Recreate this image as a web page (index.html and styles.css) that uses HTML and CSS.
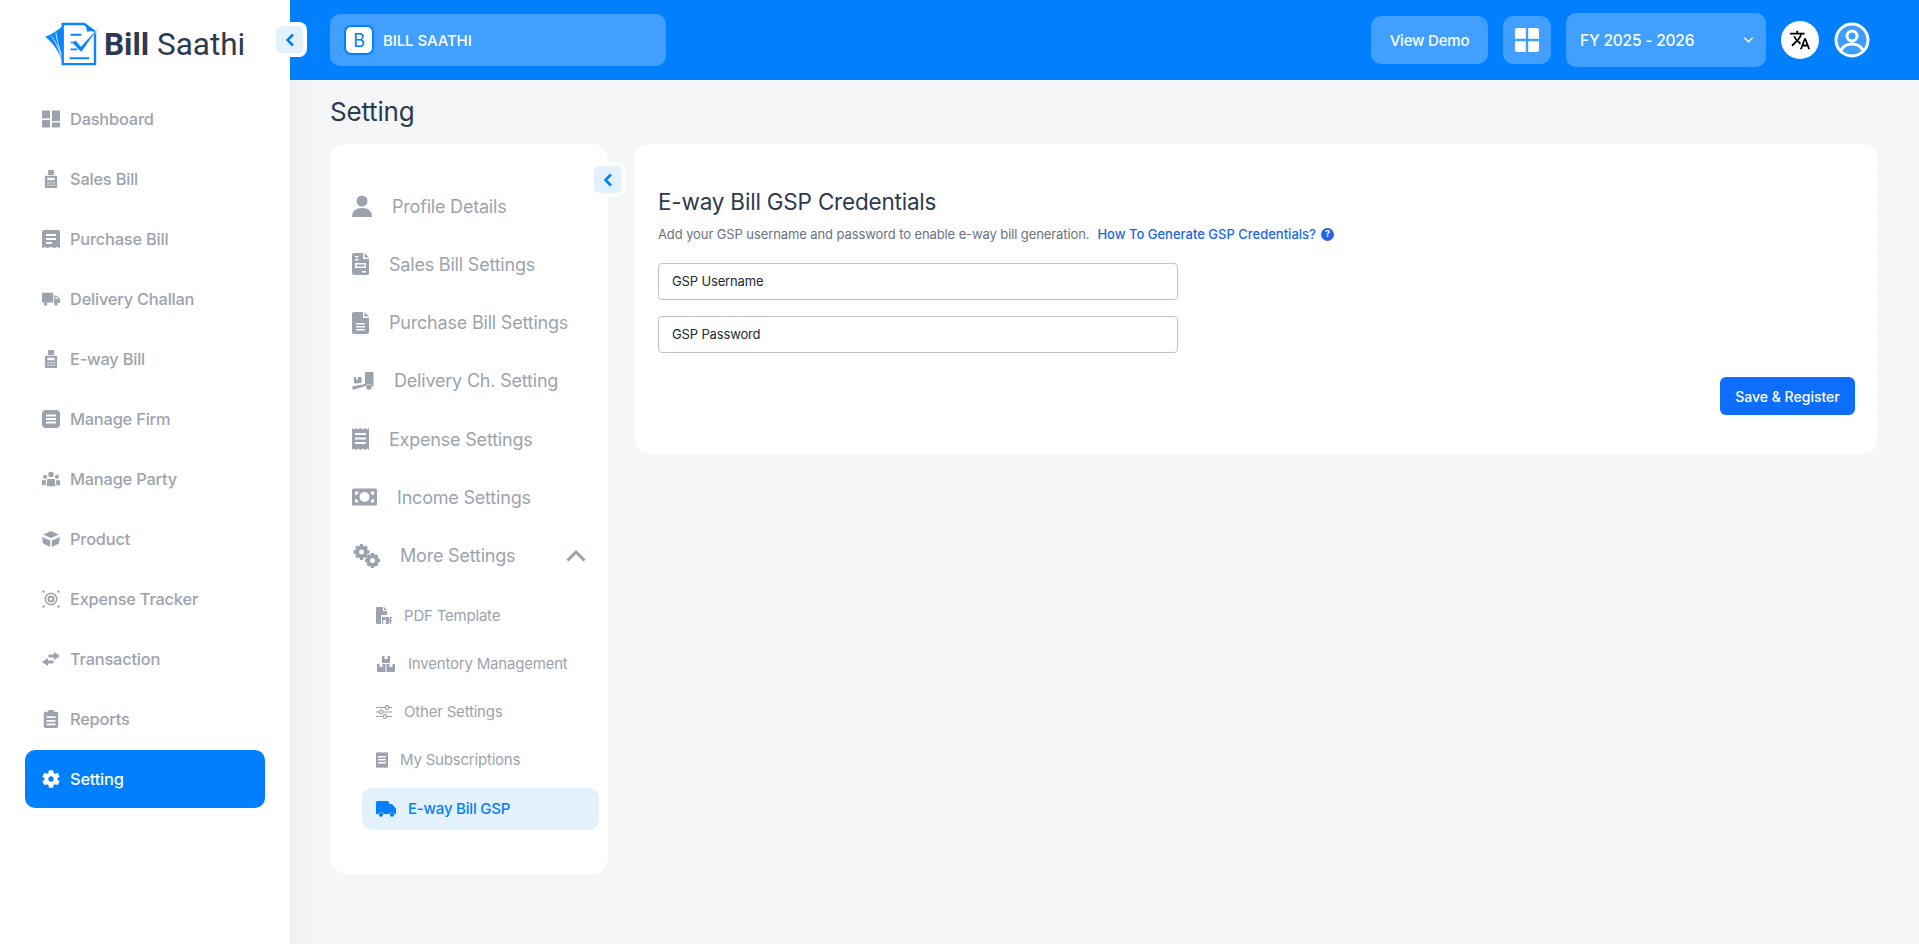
FILE: index.html
```html
<!doctype html>
<html lang="en">
    <head>
        <title>Bill Saathi - Setting</title>
        <meta name="viewport" content="width=device-width, initial-scale=1"/>
        <link rel="stylesheet" href="styles.css">
    </head>
    <body>
        <svg class="sprite" aria-hidden="true">
            <symbol id="i-pos" viewBox="0 0 18 22"><path d="M5.500 0h7v6h-7z"/><path fill-rule="evenodd" d="M3 7h12a1.500 1.500 0 0 1 1.500 1.500V20.500A1.500 1.500 0 0 1 15 22H3a1.500 1.500 0 0 1-1.500-1.500V8.500A1.500 1.500 0 0 1 3 7zm1.500 2.500v3h9v-3zM4.500 15v1.200h2V15zm3.500 0v1.200h2V15zm3.500 0v1.200h2V15zm-7 3v1.200h2V18zm3.500 0v1.200h2V18zm3.500 0v1.200h2V18z"/></symbol>
        </svg>

        <aside class="sidebar">
            <div class="logo">
                <svg class="logo__mark" viewBox="0 0 56 46">
                    <path fill="#0a84ff" d="M0 15C6 13 12 9 18 4L18 41C14 30 8 21 0 15z"/>
                    <path fill="none" stroke="#fff" stroke-width=".8" d="M6 14C10 19 14 27 17 37M11 11C12 18 14 26 17 34"/>
                    <path fill="#fff" stroke="#0a84ff" stroke-width="2.400" d="M18 2h22l11 8v33H18z"/>
                    <path fill="#0a84ff" d="M41 2l9 7-7 1z"/>
                    <path stroke="#0a84ff" stroke-width="2" d="M26 13h11M26 21h5M26 28h7M25 37h20"/>
                    <path fill="#0a84ff" stroke="#fff" stroke-width=".6" d="M27 20.500L31.500 19 36.500 25 56 4 37 31z"/>
                </svg>
                <span class="logo__text"><b>Bill</b> Saathi</span>
            </div>
            <nav class="nav">
                <a class="nav__item">
                    <svg class="nav__icon" viewBox="0 0 18 18"><path d="M0 1.500a1 1 0 0 1 1-1h7v8H1a1 1 0 0 1-1-1zM0 10h8v7.500H1a1 1 0 0 1-1-1zM10 .5h7a1 1 0 0 1 1 1V11h-8zM10 12.500h8v4a1 1 0 0 1-1 1h-7z"/></svg>
                    Dashboard
                </a>
                <a class="nav__item">
                    <svg class="nav__icon" viewBox="0 0 18 22"><use href="#i-pos"/></svg>
                    Sales Bill
                </a>
                <a class="nav__item">
                    <svg class="nav__icon" viewBox="0 0 18 18"><path fill-rule="evenodd" d="M2 0h14a2 2 0 0 1 2 2v16l-3-1-2 1-4-1-4 1-2-1-3 1V2a2 2 0 0 1 2-2zm2 4v2h10V4zm0 4v2h10V8zm0 4v2h6v-2z"/></svg>
                    Purchase Bill
                </a>
                <a class="nav__item">
                    <svg class="nav__icon" viewBox="0 0 20 16"><path d="M0 1h12.500v11H0z"/><path fill-rule="evenodd" d="M13.500 4h2.500l4 4v4.500h-6.500zm1.500 1.500V8h3l-2.200-2.500z"/><circle cx="4" cy="13.500" r="2"/><circle cx="15.500" cy="13.500" r="2"/></svg>
                    Delivery Challan
                </a>
                <a class="nav__item">
                    <svg class="nav__icon" viewBox="0 0 18 22"><use href="#i-pos"/></svg>
                    E-way Bill
                </a>
                <a class="nav__item">
                    <svg class="nav__icon" viewBox="0 0 18 18"><path fill-rule="evenodd" d="M4 0h10a4 4 0 0 1 4 4v10a4 4 0 0 1-4 4H4a4 4 0 0 1-4-4V4a4 4 0 0 1 4-4zm0 4.500v2h10v-2zm0 3.500v2h10V8zm0 3.500v2h10v-2z"/></svg>
                    Manage Firm
                </a>
                <a class="nav__item">
                    <svg class="nav__icon" viewBox="0 0 20 16"><circle cx="10" cy="3" r="3"/><circle cx="3.500" cy="5.500" r="2.200"/><circle cx="16.500" cy="5.500" r="2.200"/><path d="M6 8h8l1 8H5zM0 9.500h4.500L4 15H0zM15.500 9.500H20V15h-4z"/></svg>
                    Manage Party
                </a>
                <a class="nav__item">
                    <svg class="nav__icon" viewBox="0 0 18 16"><path d="M9 0l8 3.500-8 3.500-8-3.500zM0 6l8.200 3.500V16L1 12.500zM18 6L9.800 9.500V16l7.200-3.500z"/></svg>
                    Product
                </a>
                <a class="nav__item">
                    <svg class="nav__icon" viewBox="0 0 18 18"><path fill-rule="evenodd" d="M9 2.500a6.500 6.500 0 1 1 0 13 6.500 6.500 0 0 1 0-13zm0 1.500a5 5 0 1 0 0 10 5 5 0 0 0 0-10z"/><path fill-rule="evenodd" d="M9 5.500a3.500 3.500 0 1 1 0 7 3.500 3.500 0 0 1 0-7zm0 2a1.500 1.500 0 1 0 0 3 1.500 1.500 0 0 0 0-3z"/><circle cx="1.500" cy="1.500" r="1.200"/><circle cx="16.500" cy="1.500" r="1.200"/><circle cx="1.500" cy="16.500" r="1.200"/><circle cx="16.500" cy="16.500" r="1.200"/></svg>
                    Expense Tracker
                </a>
                <a class="nav__item">
                    <svg class="nav__icon" viewBox="0 0 18 14"><path d="M12 0l6 4-6 4V5.500H6.500v-3H12zM6 6v2.500h5.500v3H6V14l-6-4z"/></svg>
                    Transaction
                </a>
                <a class="nav__item">
                    <svg class="nav__icon" viewBox="0 0 16 20"><path fill-rule="evenodd" d="M5 0h6v2h3a2 2 0 0 1 2 2v14a2 2 0 0 1-2 2H2a2 2 0 0 1-2-2V4a2 2 0 0 1 2-2h3zM3 7v2h10V7zm0 4v2h10v-2zm0 4v2h10v-2z"/></svg>
                    Reports
                </a>
                <a class="nav__item nav__item--active">
                    <svg class="nav__icon nav__icon--gear" viewBox="0 0 24 24"><path d="M19.140 12.940c.04-.3.06-.61.06-.94 0-.32-.02-.64-.07-.94l2.030-1.580c.18-.14.23-.41.12-.61l-1.920-3.320c-.12-.22-.37-.29-.59-.22l-2.390.96c-.5-.38-1.030-.7-1.620-.94l-.36-2.540c-.04-.24-.24-.41-.48-.41h-3.840c-.24 0-.43.17-.47.41l-.36 2.540c-.59.24-1.130.57-1.620.94l-2.390-.96c-.22-.08-.47 0-.59.22L2.740 8.870c-.12.21-.08.47.12.61l2.030 1.580c-.05.3-.09.63-.09.94s.02.64.07.94l-2.030 1.580c-.18.14-.23.41-.12.61l1.920 3.320c.12.22.37.29.59.22l2.390-.96c.5.38 1.030.7 1.620.94l.36 2.540c.05.24.24.41.48.41h3.840c.24 0 .44-.17.47-.41l.36-2.540c.59-.24 1.130-.56 1.620-.94l2.390.96c.22.08.47 0 .59-.22l1.920-3.320c.12-.22.07-.47-.12-.61l-2.010-1.580zM12 15c-1.650 0-3-1.350-3-3s1.350-3 3-3 3 1.350 3 3-1.350 3-3 3z"/></svg>
                    Setting
                </a>
            </nav>
        </aside>

        <button class="collapse collapse--sidebar">
            <svg viewBox="0 0 10 14"><path d="M8 1.500L2.500 7 8 12.500"/></svg>
        </button>

        <div class="page">
            <header class="topbar">
                <div class="firm">
                    <span class="firm__badge">B</span>
                    BILL SAATHI
                </div>
                <div class="topbar__right">
                    <a class="topbar__btn topbar__btn--demo">View Demo</a>
                    <a class="topbar__btn topbar__btn--apps">
                        <svg viewBox="0 0 24 24"><path d="M2 0h8.800v10.800H0V2a2 2 0 0 1 2-2zM13.200 0H22a2 2 0 0 1 2 2v8.800H13.200zM0 13.200h10.800V24H2a2 2 0 0 1-2-2zM13.200 13.200H24V22a2 2 0 0 1-2 2h-8.800z"/></svg>
                    </a>
                    <div class="fy">
                        FY 2025 - 2026
                        <svg viewBox="0 0 12 8"><path d="M1.500 1.500L6 6l4.500-4.500"/></svg>
                    </div>
                    <span class="circle circle--lang">
                        <svg viewBox="0 0 24 24"><path d="M12.870 15.070l-2.540-2.510.03-.03c1.740-1.940 2.980-4.170 3.710-6.530H17V4h-7V2H8v2H1v1.990h11.170C11.500 7.920 10.440 9.750 9 11.350 8.070 10.320 7.300 9.190 6.690 8h-2c.73 1.630 1.730 3.170 2.980 4.560l-5.090 5.020L4 19l5-5 3.110 3.110.76-2.040zM18.500 10h-2L12 22h2l1.120-3h4.750L21 22h2l-4.500-12zm-2.620 7l1.620-4.330L19.120 17h-3.240z"/></svg>
                    </span>
                    <span class="circle circle--user">
                        <svg viewBox="0 0 36 36">
                            <circle cx="18" cy="18" r="16" fill="#3f9dff" stroke="#fff" stroke-width="3"/>
                            <circle cx="18" cy="14" r="5" fill="none" stroke="#fff" stroke-width="3"/>
                            <path d="M7 28c3-5 7-6 11-6s8 1 11 6" fill="none" stroke="#fff" stroke-width="3"/>
                        </svg>
                    </span>
                </div>
            </header>

            <main class="content">
                <h1 class="content__title">Setting</h1>
                <div class="columns">
                    <section class="menu">
                        <a class="menu__item">
                            <svg class="menu__icon menu__icon--user" viewBox="0 0 20 22"><circle cx="10" cy="6" r="5.500"/><path d="M0 22c0-6 4-9 10-9s10 3 10 9z"/></svg>
                            Profile Details
                        </a>
                        <a class="menu__item">
                            <svg class="menu__icon menu__icon--doc" viewBox="0 0 17 22"><path fill-rule="evenodd" d="M2 0h9v6h6v14a2 2 0 0 1-2 2H2a2 2 0 0 1-2-2V2a2 2 0 0 1 2-2zm1 3v1.500h3.500V3zm0 3v1.500h3.500V6zm0 4v5h11v-5zm1.500 1.500h8v2h-8zM10 18v1.500h4V18zM12.500 0L17 4.500h-4.500z"/></svg>
                            Sales Bill Settings
                        </a>
                        <a class="menu__item">
                            <svg class="menu__icon menu__icon--doc" viewBox="0 0 17 22"><path fill-rule="evenodd" d="M2 0h9v6h6v14a2 2 0 0 1-2 2H2a2 2 0 0 1-2-2V2a2 2 0 0 1 2-2zm2 11v1.500h9V11zm0 3v1.500h9V14zm0 3v1.500h9V17zM12.500 0L17 4.500h-4.500z"/></svg>
                            Purchase Bill Settings
                        </a>
                        <a class="menu__item">
                            <svg class="menu__icon menu__icon--fork" viewBox="0 0 22 18"><path d="M13 0h8.500v14.500h-1.500a3 3 0 0 0-5.800-.7L1 18l-1-3.500 13-2.500z"/><circle cx="17" cy="15" r="2.700"/><path d="M2 5h2v2.500h2V5h3.500v5.500L3 11.800 1.800 9.500z"/></svg>
                            Delivery Ch. Setting
                        </a>
                        <a class="menu__item">
                            <svg class="menu__icon menu__icon--doc" viewBox="0 0 17 22"><path fill-rule="evenodd" d="M0 0l2 1.500L4 0l2.500 1.500L8.500 0l2 1.500L13 0l2 1.500L17 0v22l-2-1.500-2 1.500-2.500-1.500L8.500 22l-2-1.500L4 22l-2-1.500L0 22zm3 5v2h11V5zm0 4.500v2h11v-2zm0 4.500v2h11v-2z"/></svg>
                            Expense Settings
                        </a>
                        <a class="menu__item">
                            <svg class="menu__icon menu__icon--cash" viewBox="0 0 25 17"><path fill-rule="evenodd" d="M1.500 0h22A1.500 1.500 0 0 1 25 1.500v14a1.500 1.500 0 0 1-1.500 1.500h-22A1.500 1.500 0 0 1 0 15.500v-14A1.500 1.500 0 0 1 1.500 0zm11 3.500a5 5 0 1 0 0 10 5 5 0 0 0 0-10zM3 3v3.500A3.500 3.500 0 0 0 6.500 3zm15.500 0A3.500 3.500 0 0 0 22 6.500V3zM3 10.500V14h3.500A3.500 3.500 0 0 0 3 10.500zm19 0a3.500 3.500 0 0 0-3.500 3.500H22z"/></svg>
                            Income Settings
                        </a>
                        <a class="menu__item">
                            <svg class="menu__icon menu__icon--gears" viewBox="0 0 28 24"><path fill-rule="evenodd" d="M8 0h3l.5 2.500 2.300-1 2 2-1 2.300L17.500 6.500v3l-2.700.5 1 2.300-2 2-2.300-1L11 16H8l-.5-2.700-2.300 1-2-2 1-2.300L1.500 9.500v-3l2.700-.7-1-2.300 2-2 2.300 1zM9.500 5.500a2.500 2.500 0 1 0 0 5 2.500 2.500 0 0 0 0-5z"/><path fill-rule="evenodd" d="M19 9h3l.5 2 2-.7 2 2-.8 2 2.300.7v3l-2.300.5.8 2-2 2-2-.8-.5 2.300h-3l-.5-2.300-2 .8-2-2 .8-2-2.300-.5v-3l2.300-.7-.8-2 2-2 2 .7zm1.500 5a2.500 2.500 0 1 0 0 5 2.500 2.500 0 0 0 0-5z"/></svg>
                            More Settings
                            <svg class="menu__chevron" viewBox="0 0 20 12"><path d="M1.500 10.500L10 2l8.500 8.500"/></svg>
                        </a>
                        <div class="submenu">
                            <a class="submenu__item">
                                <svg class="submenu__icon" viewBox="0 0 16 17"><path d="M1 0h6v4h4v4H5v9H1a1 1 0 0 1-1-1V1a1 1 0 0 1 1-1zM8 0l3 3H8zM6 10h2.500a1.500 1.500 0 0 1 0 3H7.200v4H6zM10 10h1.500a2 2 0 0 1 2 2v3a2 2 0 0 1-2 2H10zM14 10h2v1.300h-.9V13h.9v1.200h-.9V17H14z"/></svg>
                                PDF Template
                            </a>
                            <a class="submenu__item">
                                <svg class="submenu__icon submenu__icon--wide" viewBox="0 0 18 16"><path d="M5 0h2.500v3h3V0H13v7H5zM0 8h2.500v3h3V8H8.500v8H1a1 1 0 0 1-1-1zM9.500 8h3v3h3V8H18v7a1 1 0 0 1-1 1H9.500z"/></svg>
                                Inventory Management
                            </a>
                            <a class="submenu__item">
                                <svg class="submenu__icon submenu__icon--lines" viewBox="0 0 16 14"><path d="M0 2.500h9M13 2.500h3M0 7h3M7 7h9M0 11.500h7M11 11.500h5"/><circle cx="11" cy="2.500" r="1.800"/><circle cx="5" cy="7" r="1.800"/><circle cx="9" cy="11.500" r="1.800"/></svg>
                                Other Settings
                            </a>
                            <a class="submenu__item">
                                <svg class="submenu__icon submenu__icon--narrow" viewBox="0 0 12 16"><path fill-rule="evenodd" d="M0 0l1.500.8L3 0l1.500.8L6 0l1.500.8L9 0l1.500.8L12 0v16l-1.500-.8L9 16l-1.500-.8L6 16l-1.500-.8L3 16l-1.500-.8L0 16zm2 4v1.500h8V4zm0 3v1.500h8V7zm0 3v1.500h8V10z"/></svg>
                                My Subscriptions
                            </a>
                            <a class="submenu__item submenu__item--active">
                                <svg class="submenu__icon submenu__icon--wide" viewBox="0 0 20 16"><path d="M1.500 0h10A1.500 1.500 0 0 1 13 1.500V3h3l4 4.500V13h-1.200a3 3 0 0 0-5.600 0H7.800a3 3 0 0 0-5.600 0H0V1.500A1.500 1.500 0 0 1 1.500 0z"/><circle cx="5" cy="13.500" r="2.200"/><circle cx="16" cy="13.500" r="2.200"/></svg>
                                E-way Bill GSP
                            </a>
                        </div>
                    </section>

                    <button class="collapse collapse--menu">
                        <svg viewBox="0 0 10 14"><path d="M8 1.500L2.500 7 8 12.500"/></svg>
                    </button>

                    <section class="panel">
                        <h2 class="panel__title">E-way Bill GSP Credentials</h2>
                        <p class="panel__desc">
                            Add your GSP username and password to enable e-way bill generation.
                            <a class="panel__link">How To Generate GSP Credentials?</a>
                            <span class="panel__help">?</span>
                        </p>
                        <input class="field" type="text" placeholder="GSP Username">
                        <input class="field" type="password" placeholder="GSP Password">
                        <div class="panel__actions">
                            <button class="save">Save &amp; Register</button>
                        </div>
                    </section>
                </div>
            </main>
        </div>
    </body>
</html>
```

FILE: styles.css
```css
* {
    box-sizing: border-box;
}
html, body {
    height: 100%;
}
body {
    margin: 0;
    display: flex;
    overflow: hidden;
    position: relative;
    background-color: #f4f6f8;
    font-family: Inter, "Liberation Sans", sans-serif;
    letter-spacing: -0.2px;
}
.sprite {
    display: none;
}
a {
    text-decoration: none;
}
svg {
    flex: none;
}

/* sidebar */
.sidebar {
    width: 290px;
    flex: none;
    background-color: #fff;
    padding: 0 25px;
}
.logo {
    height: 90px;
    display: flex;
    align-items: center;
    gap: 4px;
    padding: 0 0 0 20px;
}
.logo__mark {
    width: 55px;
    height: 45px;
    margin-top: -1px;
}
.logo__text {
    font-family: Roboto, sans-serif;
    font-size: 31.500px;
    color: #2d3a4f;
    letter-spacing: 0;
    margin-top: -2px;
    white-space: nowrap;
}
.logo__text b {
    font-weight: 700;
}
.nav__item {
    height: 58px;
    margin-bottom: 2px;
    padding-left: 17px;
    display: flex;
    align-items: center;
    gap: 10px;
    border-radius: 10px;
    color: #9ca3af;
    font-size: 16.400px;
    font-weight: 500;
}
.nav__icon {
    width: 18px;
    height: 18px;
    fill: currentColor;
}
.nav__icon--gear {
    width: 22px;
    height: 22px;
    margin: 0 -2px 0 -2px;
}
.nav__item--active {
    background-color: #007fff;
    color: #fff;
}

/* little square buttons that fold a column */
.collapse {
    position: absolute;
    width: 31px;
    height: 35px;
    padding: 0;
    border: 4px solid #fff;
    border-radius: 8px;
    background-color: #e3f1fd;
    display: flex;
    align-items: center;
    justify-content: center;
}
.collapse svg {
    width: 10px;
    height: 14px;
    fill: none;
    stroke: #007fff;
    stroke-width: 2.500;
}
.collapse--sidebar {
    left: 276px;
    top: 22px;
    border-left: 0;
}
.collapse--menu {
    left: 594px;
    top: 162px;
    border-left: 0;
}

/* top bar */
.page {
    flex: 1;
    min-width: 0;
    display: flex;
    flex-direction: column;
    background: linear-gradient(to right, #eef0f3, #f4f6f8 24px);
}
.topbar {
    height: 80px;
    flex: none;
    background-color: #007fff;
    padding: 0 49px 0 40px;
    display: flex;
    align-items: center;
    justify-content: space-between;
    color: #fff;
}
.firm {
    width: 336px;
    height: 52px;
    padding-left: 14px;
    display: flex;
    align-items: center;
    gap: 9px;
    border-radius: 10px;
    background-color: #409fff;
    font-size: 15px;
    font-weight: 500;
    letter-spacing: -0.100px;
}
.firm__badge {
    width: 30px;
    height: 30px;
    border-radius: 7px;
    border: 2px solid #007fff;
    background-color: #fff;
    color: #007fff;
    font-size: 18px;
    font-weight: 400;
    display: flex;
    align-items: center;
    justify-content: center;
}
.topbar__right {
    display: flex;
    align-items: center;
    gap: 15px;
}
.topbar__btn {
    height: 48px;
    display: flex;
    align-items: center;
    justify-content: center;
    border-radius: 10px;
    background-color: #409fff;
    color: #fff;
    font-size: 15px;
    font-weight: 500;
}
.topbar__btn--demo {
    width: 117px;
}
.topbar__btn--apps {
    width: 48px;
}
.topbar__btn--apps svg {
    width: 24px;
    height: 24px;
    fill: #fff;
}
.fy {
    width: 200px;
    height: 54px;
    padding: 0 12px 0 14px;
    display: flex;
    align-items: center;
    justify-content: space-between;
    border-radius: 10px;
    background-color: #409fff;
    font-size: 15.500px;
    font-weight: 500;
}
.fy svg {
    width: 11px;
    height: 8px;
    fill: none;
    stroke: #fff;
    stroke-width: 1.500;
}
.circle {
    display: flex;
    align-items: center;
    justify-content: center;
    border-radius: 50%;
}
.circle--lang {
    width: 38px;
    height: 38px;
    background-color: #fff;
}
.circle--lang svg {
    width: 22px;
    height: 22px;
    fill: #000;
}
.circle--user svg {
    width: 36px;
    height: 36px;
}

/* content */
.content {
    flex: 1;
    padding: 16px 40px 0;
}
.content__title {
    margin: 0 0 16px;
    font-size: 26px;
    line-height: 32px;
    font-weight: 400;
    color: #2d3a4f;
}
.columns {
    display: flex;
    align-items: flex-start;
    gap: 25px;
}

/* settings menu */
.menu {
    width: 279px;
    flex: none;
    height: 730px;
    padding: 33px 22px 0;
    border-radius: 16px;
    background-color: #fff;
    border-right: 1px dashed #eceef1;
    color: #9ca3af;
}
.menu__item {
    height: 58.250px;
    display: flex;
    align-items: center;
    gap: 20px;
    font-size: 18px;
    font-weight: 400;
}
.menu__icon {
    fill: currentColor;
    height: 22px;
}
.menu__icon--user {
    width: 20px;
}
.menu__icon--doc {
    width: 17px;
}
.menu__icon--fork {
    width: 22px;
}
.menu__icon--cash {
    width: 25px;
}
.menu__icon--gears {
    width: 28px;
    height: 24px;
}
.menu__chevron {
    width: 20px;
    height: 12px;
    margin-left: auto;
    fill: none;
    stroke: currentColor;
    stroke-width: 3;
}
.submenu {
    margin: 7px -13px 0 10px;
}
.submenu__item {
    height: 48px;
    padding-left: 14px;
    display: flex;
    align-items: center;
    gap: 12px;
    border-radius: 10px;
    font-size: 15px;
}
.submenu__icon {
    width: 16px;
    height: 17px;
    fill: currentColor;
}
.submenu__icon--wide {
    width: 20px;
    height: 16px;
}
.submenu__icon--narrow {
    width: 12px;
    height: 16px;
}
.submenu__icon--lines {
    height: 14px;
    fill: #fff;
    stroke: currentColor;
    stroke-width: 1.200;
}
.submenu__item--active {
    height: 42px;
    margin-top: 4px;
    background-color: #e3f1fd;
    color: #007fff;
    font-weight: 500;
}

/* gsp panel */
.panel {
    flex: 1;
    height: 310px;
    padding: 43px 23px 0 24px;
    border-radius: 16px;
    background-color: #fff;
    border-right: 1px dashed #eceef1;
}
.panel__title {
    margin: 0;
    font-size: 22.500px;
    line-height: 30px;
    font-weight: 400;
    color: #2d3a4f;
}
.panel__desc {
    margin: 7px 0 19px;
    font-size: 13px;
    line-height: 20px;
    letter-spacing: -0.100px;
    color: #6b7280;
    display: flex;
    align-items: center;
    gap: 8px;
}
.panel__link {
    color: #1a66e8;
    font-weight: 500;
    letter-spacing: 0;
}
.panel__help {
    width: 13px;
    height: 13px;
    margin-left: -3px;
    border-radius: 50%;
    background-color: #2563eb;
    color: #fff;
    font-size: 9px;
    font-weight: 700;
    display: flex;
    align-items: center;
    justify-content: center;
}
.field {
    display: block;
    width: 520px;
    height: 37px;
    margin: 0 0 16px;
    padding: 0 13px 1px;
    border: 1px solid #bfc3c8;
    border-radius: 4px;
    font: inherit;
    font-size: 13px;
    letter-spacing: -0.150px;
}
.field::placeholder {
    color: #212934;
    opacity: 1;
}
.panel__actions {
    display: flex;
    justify-content: flex-end;
    margin-top: 24px;
}
.save {
    width: 135px;
    height: 38px;
    border: 0;
    border-radius: 6px;
    background-color: #0d6efd;
    color: #fff;
    font: inherit;
    font-size: 14px;
    letter-spacing: 0;
    font-weight: 500;
}
```
